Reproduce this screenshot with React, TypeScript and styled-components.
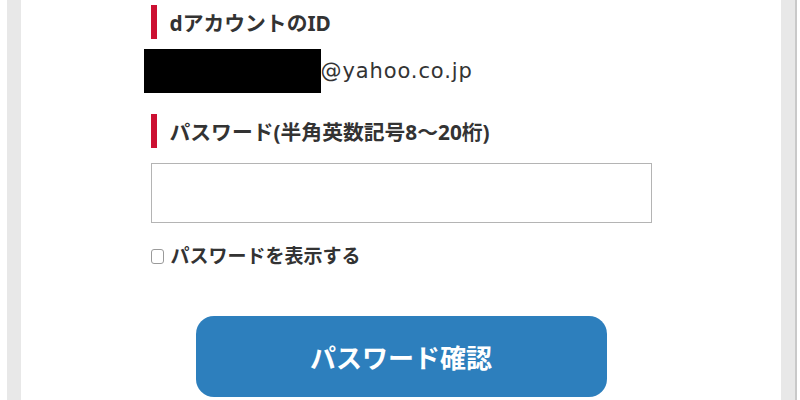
import React from "react";
import styled, { createGlobalStyle } from "styled-components";

const GlobalStyle = createGlobalStyle`
  html, body { margin: 0; padding: 0; background: #ffffff; }
  body {
    font-family: "Noto Sans", "Noto Sans CJK JP", sans-serif;
    color: #333333;
  }
`;

const Page = styled.div`
  display: flex;
  height: 400px;
  width: 800px;
  overflow: hidden;
  padding-left: 7px;
  box-sizing: border-box;
  background: #ffffff;
`;

const Frame = styled.div`
  display: flex;
  width: 790px;
  border-right: 2px solid #c9c9c9;
  box-sizing: border-box;
`;

const Panel = styled.main`
  flex: 1;
  border-left: 14px solid #e8e8e8;
  border-right: 14px solid #e8e8e8;
  background: #ffffff;
  display: flex;
  justify-content: center;
  padding-top: 5px;
`;

const Form = styled.div`
  width: 501px;
  display: flex;
  flex-direction: column;
`;

const Label = styled.div<{ $mt?: number }>`
  display: flex;
  align-items: center;
  height: 34px;
  margin-top: ${(p) => p.$mt ?? 0}px;
  gap: 13px;
  font-family: "Noto Sans", "Noto Sans CJK JP", sans-serif;
  font-weight: 700;
  font-size: 20.8px;
  color: #333333;
`;

const RedBar = styled.span`
  display: block;
  flex-shrink: 0;
  width: 6px;
  height: 100%;
  background: #cc1032;
`;

const EmailRow = styled.div`
  display: flex;
  align-items: center;
  margin-top: 10px;
  margin-left: -7px;
  height: 44px;
`;

const Redacted = styled.span`
  display: block;
  flex-shrink: 0;
  width: 177px;
  height: 44px;
  background: #000000;
`;

const Email = styled.span`
  font-family: "DejaVu Sans", "Noto Sans CJK JP", sans-serif;
  font-size: 21px;
  color: #333333;
  letter-spacing: 0.9px;
`;

const PasswordInput = styled.input`
  margin-top: 15px;
  height: 60px;
  width: 100%;
  box-sizing: border-box;
  border: 1.5px solid #b4b4b4;
  border-radius: 0;
  outline: none;
  background: #ffffff;
  font-size: 18px;
  padding: 0 10px;
`;

const CheckRow = styled.label`
  display: flex;
  align-items: center;
  gap: 7px;
  margin-top: 21px;
  height: 22px;
  font-family: "Noto Sans", "Noto Sans CJK JP", sans-serif;
  font-weight: 700;
  font-size: 19px;
  color: #333333;
`;

const Check = styled.input`
  appearance: none;
  flex-shrink: 0;
  margin: 3px 0 0 0;
  width: 13px;
  height: 15px;
  border: 1px solid #9a9a9a;
  border-radius: 3px;
  background: #ffffff;
  box-sizing: border-box;
`;

const Submit = styled.button`
  align-self: center;
  margin-top: 50px;
  width: 411px;
  height: 81px;
  flex-shrink: 0;
  border: none;
  border-radius: 18px;
  background: #2d7fbd;
  color: #ffffff;
  font-family: "Noto Sans", "Noto Sans CJK JP", sans-serif;
  font-weight: 700;
  font-size: 26px;
  cursor: pointer;
`;

export default function App() {
  return (
    <>
      <GlobalStyle />
      <Page>
        <Frame>
          <Panel>
            <Form>
              <Label>
                <RedBar />
                dアカウントのID
              </Label>
              <EmailRow>
                <Redacted />
                <Email>@yahoo.co.jp</Email>
              </EmailRow>
              <Label $mt={21}>
                <RedBar />
                パスワード(半角英数記号8〜20桁)
              </Label>
              <PasswordInput type="password" />
              <CheckRow>
                <Check type="checkbox" />
                パスワードを表示する
              </CheckRow>
              <Submit type="button">パスワード確認</Submit>
            </Form>
          </Panel>
        </Frame>
      </Page>
    </>
  );
}
